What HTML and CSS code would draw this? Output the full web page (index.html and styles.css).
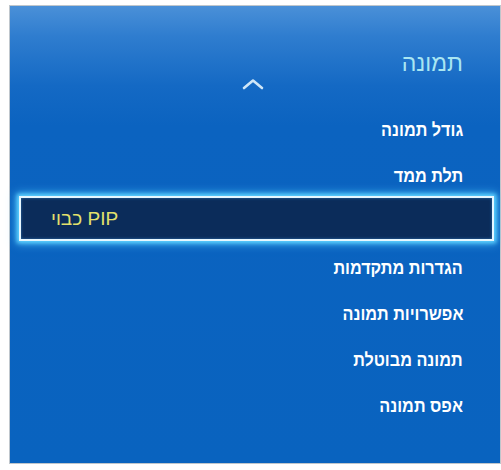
FILE: index.html
```html
<!DOCTYPE html>
<html lang="he" dir="rtl">
<head>
<meta charset="utf-8">
<link rel="stylesheet" href="styles.css">
</head>
<body>
<div class="panel">
  <div class="title">תמונה</div>
  <div class="chev">
    <svg width="26" height="12" viewBox="0 0 26 12"><polyline points="4,10 13,2.5 22,10" fill="none" stroke="#cfe6f7" stroke-width="2.6" stroke-linecap="round" stroke-linejoin="round"/></svg>
  </div>
  <ul class="menu">
    <li class="item"><span class="lbl">גודל תמונה</span></li>
    <li class="item"><span class="lbl">תלת ממד</span></li>
    <li class="item selected"><span class="sel-text">PIP כבוי</span></li>
    <li class="item after"><span class="lbl">הגדרות מתקדמות</span></li>
    <li class="item"><span class="lbl">אפשרויות תמונה</span></li>
    <li class="item"><span class="lbl">תמונה מבוטלת</span></li>
    <li class="item"><span class="lbl">אפס תמונה</span></li>
  </ul>
</div>
</body>
</html>
```
FILE: styles.css
```css
html, body {
  margin: 0;
  padding: 0;
  background: #ffffff;
}
body {
  width: 501px;
  height: 470px;
  font-family: "Liberation Sans", "DejaVu Sans", sans-serif;
}
.panel {
  margin: 5px 0 0 5px;
  width: 490px;
  height: 457px;
  border: 1px solid #bfc6cc;
  background: linear-gradient(to bottom, #4a90d8 0px, #2f7dcf 30px, #1469c4 80px, #0b63c0 120px, #0963bf 100%);
  display: flex;
  flex-direction: column;
}
.title {
  margin-top: 43px;
  padding-right: 37px;
  font-size: 23px;
  line-height: 28px;
  color: #a9e6f2;
  text-align: right;
}
.chev {
  display: flex;
  justify-content: center;
  margin-top: 1px;
  padding-right: 4px;
  height: 14px;
}
.chev svg { display: block; }
.menu {
  list-style: none;
  margin: 15px 0 0 0;
  padding: 0;
  display: flex;
  flex-direction: column;
}
.item {
  height: 46px;
  display: flex;
  align-items: center;
  padding-right: 37px;
  color: #ffffff;
  font-size: 18px;
  font-weight: bold;
}
.lbl {
  display: inline-block;
  transform: scaleX(0.9);
  transform-origin: right center;
  white-space: nowrap;
}
.item.selected {
  height: 41px;
  margin: -3px 6px 0 9px;
  padding: 0 32px 0 0;
  justify-content: flex-end;
  background: #0b2c5a;
  border: 2px solid #e6f7ff;
  box-shadow: 0 0 4px 2px #5fd2ff, 0 0 9px 3px rgba(80, 200, 255, 0.7), inset 0 0 3px rgba(80, 180, 255, 0.5);
}
.sel-text {
  padding-left: 30px;
  color: #e2e06c;
  font-weight: normal;
  font-size: 19px;
}
.item.after {
  margin-top: 4px;
}
```
